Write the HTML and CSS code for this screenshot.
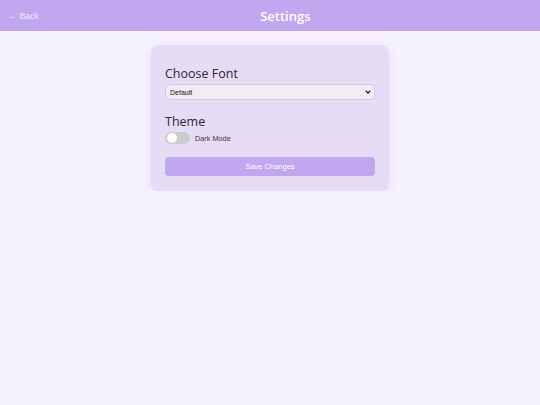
FILE: index.html
```html
<!DOCTYPE html>
<html lang="en">
<head>
    <meta charset="UTF-8">
    <meta name="viewport" content="width=device-width, initial-scale=1.0">
    <title>Settings</title>
    <link rel="stylesheet" href="styles.css">
</head>
<body>
    <header class="topbar">
        <a href="#" class="back">&larr; Back</a>
        <h1>Settings</h1>
    </header>

    <div class="container">
        <div class="card">
            <div class="section">
                <h2>Choose Font</h2>
                <div class="select-wrap">
                    <select class="font-select">
                        <option selected>Default</option>
                        <option>Serif</option>
                        <option>Monospace</option>
                    </select>
                    <svg class="chevron" width="6" height="4" viewBox="0 0 6 4">
                        <path d="M0.8 0.8 L3 3 L5.2 0.8" fill="none" stroke="#222" stroke-width="1.3"/>
                    </svg>
                </div>
            </div>

            <div class="section">
                <h2>Theme</h2>
                <label class="toggle-row">
                    <span class="toggle"><span class="knob"></span></span>
                    <span class="toggle-label">Dark Mode</span>
                </label>
            </div>

            <button class="save">Save Changes</button>
        </div>
    </div>
</body>
</html>
```

FILE: styles.css
```css
body {
    margin: 0;
    background-color: #f5f1fe;
    font-family: "Liberation Sans", Arial, sans-serif;
    color: #2a2a35;
}

.topbar {
    height: 31px;
    padding: 0 8px 0 9px;
    background-color: #c1a6f0;
    display: flex;
    align-items: center;
}

.topbar h1 {
    flex: 1;
    margin: 0;
    text-align: center;
    font-family: "Open Sans", sans-serif;
    font-weight: 600;
    font-size: 13px;
    color: #ffffff;
}

.back {
    font-size: 8.5px;
    color: rgba(255, 255, 255, 0.8);
    text-decoration: none;
}

.container {
    display: flex;
    justify-content: center;
    padding-top: 14px;
}

.card {
    width: 210px;
    padding: 20px 14px 15px;
    background-color: #e6dcf6;
    border-radius: 8px;
    box-shadow: 0 2px 8px rgba(120, 90, 170, 0.12);
}

.section {
    margin-bottom: 13px;
}

.section h2 {
    margin: 0 0 1px;
    font-family: "Open Sans", sans-serif;
    font-weight: 500;
    font-size: 12.5px;
    line-height: 18px;
    color: #2b2733;
}

.select-wrap {
    position: relative;
}

.font-select {
    display: block;
    width: 100%;
    height: 16px;
    appearance: none;
    font-family: "Liberation Sans", Arial, sans-serif;
    font-size: 7px;
    padding: 0 4px;
    border: 1px solid #d4c6ee;
    border-radius: 4px;
    background-color: #f0eef3;
    color: #111;
}

.chevron {
    position: absolute;
    right: 4px;
    top: 6px;
}

.toggle-row {
    display: flex;
    align-items: center;
    gap: 5px;
}

.toggle {
    position: relative;
    width: 25px;
    height: 12px;
    border-radius: 6px;
    background-color: #cccccc;
}

.knob {
    position: absolute;
    left: 2px;
    top: 1px;
    width: 10px;
    height: 10px;
    border-radius: 50%;
    background-color: #ffffff;
}

.toggle-label {
    font-size: 7.3px;
    color: #3a3a44;
}

.save {
    display: block;
    width: 100%;
    height: 19px;
    border: none;
    border-radius: 4px;
    background-color: #c1a6f0;
    color: #ffffff;
    font-family: "Liberation Sans", Arial, sans-serif;
    font-size: 7.5px;
}
```
